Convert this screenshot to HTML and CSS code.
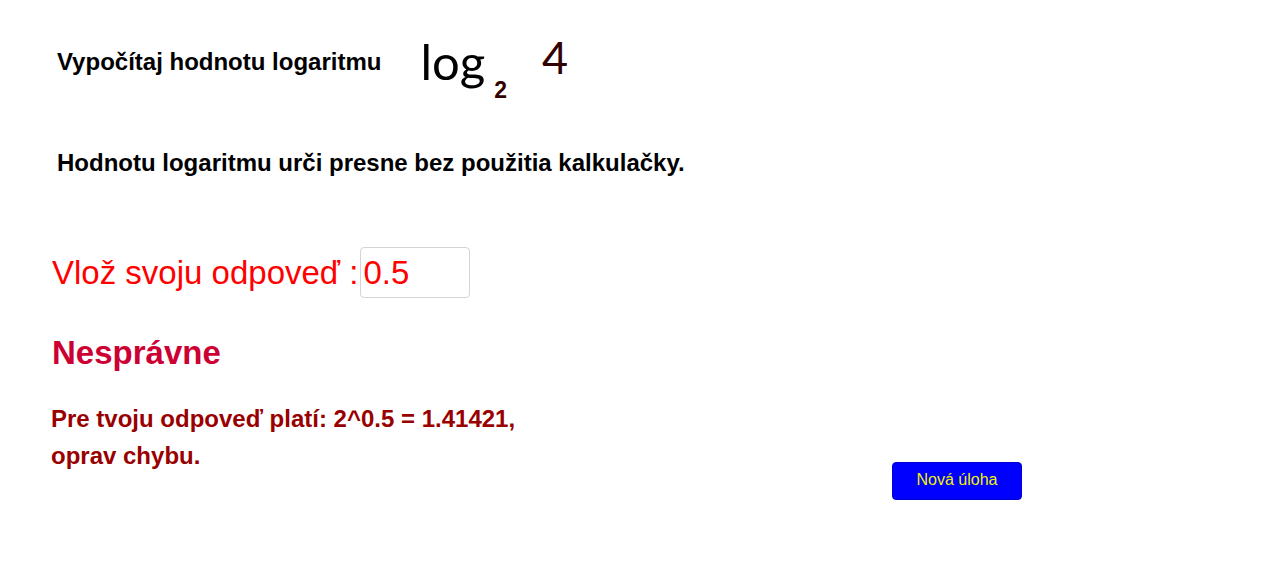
FILE: index.html
```html
<!DOCTYPE html>
<html lang="sk">
<head>
<meta charset="utf-8">
<title>Logaritmus</title>
<link rel="stylesheet" href="styles.css">
</head>
<body>
<main class="sheet">
  <div class="task">
    <h1 class="task-title">Vypočítaj hodnotu logaritmu</h1>
    <span class="log">log</span>
    <span class="base">2</span>
    <span class="arg">4</span>
  </div>
  <p class="hint">Hodnotu logaritmu urči presne bez použitia kalkulačky.</p>
  <div class="answer">
    <label class="answer-label" for="ans">Vlož svoju odpoveď :</label>
    <input class="answer-input" id="ans" type="text" value="0.5">
  </div>
  <h2 class="verdict">Nesprávne</h2>
  <div class="feedback-row">
    <p class="feedback">Pre tvoju odpoveď platí: 2^0.5 = 1.41421,<br>oprav chybu.</p>
    <button class="new-task" type="button">Nová úloha</button>
  </div>
</main>
</body>
</html>
```
FILE: styles.css
```css
html, body {
  margin: 0;
  padding: 0;
  background: #ffffff;
}
body {
  font-family: "Liberation Sans", Arial, sans-serif;
  color: #000000;
  width: 1280px;
  height: 580px;
  overflow: hidden;
}
.sheet {
  display: flex;
  flex-direction: column;
}
.task {
  display: flex;
  align-items: flex-start;
  height: 110px;
}
.task-title {
  margin: 50px 0 0 57px;
  font-size: 24px;
  line-height: 24px;
  font-weight: bold;
}
.log {
  margin: 36.5px 0 0 39px;
  font-family: Lato, "Noto Sans", sans-serif;
  font-size: 49px;
  line-height: 49px;
  color: #000000;
}
.base {
  margin: 78.5px 0 0 9px;
  font-size: 23px;
  line-height: 23px;
  font-weight: bold;
  color: #330000;
}
.arg {
  margin: 35px 0 0 35px;
  font-family: Lato, "Noto Sans", sans-serif;
  font-size: 45px;
  line-height: 45px;
  color: #330000;
}
.hint {
  margin: 41px 0 0 57px;
  font-size: 24px;
  line-height: 24px;
  font-weight: bold;
}
.answer {
  display: flex;
  align-items: center;
  margin: 72px 0 0 52px;
  height: 51px;
}
.answer-label {
  font-size: 33px;
  line-height: 51px;
  color: #ff0000;
}
.answer-input {
  box-sizing: border-box;
  width: 110px;
  height: 51px;
  margin: 0 0 0 2px;
  padding: 0 0 0 2px;
  border: 1px solid #d4d4d4;
  border-radius: 4px;
  font-family: "Liberation Sans", Arial, sans-serif;
  font-size: 33px;
  color: #ff0000;
  background: #ffffff;
  outline: none;
}
.verdict {
  margin: 38px 0 0 52px;
  font-size: 33px;
  line-height: 33px;
  font-weight: bold;
  color: #cc0033;
}
.feedback-row {
  display: grid;
  grid-template-columns: 841px 130px;
  align-items: start;
  margin: 31px 0 0 51px;
}
.feedback {
  margin: 0;
  font-size: 24px;
  line-height: 37px;
  font-weight: bold;
  color: #990000;
}
.new-task {
  margin-top: 62px;
  width: 130px;
  height: 38px;
  padding: 0 0 3px 0;
  border: 1px solid #0000d0;
  border-radius: 4px;
  background: #0000ff;
  color: #f2f200;
  font-family: "Liberation Sans", Arial, sans-serif;
  font-size: 16px;
  cursor: pointer;
}
```
